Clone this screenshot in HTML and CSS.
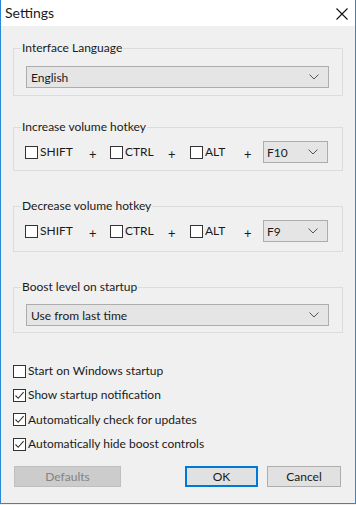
FILE: index.html
```html
<!DOCTYPE html>
<html>
<head>
<meta charset="utf-8">
<link rel="stylesheet" href="styles.css">
</head>
<body>
<div class="window">
  <div class="titlebar">
    <span class="title">Settings</span>
    <svg class="close" width="12" height="12" viewBox="0 0 12 12"><path d="M0.5 0.5 L11.5 11.5 M11.5 0.5 L0.5 11.5" stroke="#111" stroke-width="1.1" fill="none"/></svg>
  </div>
  <div class="content">
    <fieldset class="group g1">
      <legend>Interface Language</legend>
      <div class="select wide"><span>English</span><svg class="chev" width="10" height="6" viewBox="0 0 10 6"><path d="M0.5 0.5 L5 5 L9.5 0.5" stroke="#555" fill="none"/></svg></div>
    </fieldset>

    <fieldset class="group g2">
      <legend>Increase volume hotkey</legend>
      <div class="hotrow">
        <label class="cb c-shift"><span class="box"></span>SHIFT</label>
        <span class="plus p1">+</span>
        <label class="cb c-ctrl"><span class="box"></span>CTRL</label>
        <span class="plus p2">+</span>
        <label class="cb c-alt"><span class="box"></span>ALT</label>
        <span class="plus p3">+</span>
        <div class="select key"><span>F10</span><svg class="chev" width="10" height="6" viewBox="0 0 10 6"><path d="M0.5 0.5 L5 5 L9.5 0.5" stroke="#555" fill="none"/></svg></div>
      </div>
    </fieldset>

    <fieldset class="group g3">
      <legend>Decrease volume hotkey</legend>
      <div class="hotrow">
        <label class="cb c-shift"><span class="box"></span>SHIFT</label>
        <span class="plus p1">+</span>
        <label class="cb c-ctrl"><span class="box"></span>CTRL</label>
        <span class="plus p2">+</span>
        <label class="cb c-alt"><span class="box"></span>ALT</label>
        <span class="plus p3">+</span>
        <div class="select key"><span>F9</span><svg class="chev" width="10" height="6" viewBox="0 0 10 6"><path d="M0.5 0.5 L5 5 L9.5 0.5" stroke="#555" fill="none"/></svg></div>
      </div>
    </fieldset>

    <fieldset class="group g4">
      <legend>Boost level on startup</legend>
      <div class="select wide"><span>Use from last time</span><svg class="chev" width="10" height="6" viewBox="0 0 10 6"><path d="M0.5 0.5 L5 5 L9.5 0.5" stroke="#555" fill="none"/></svg></div>
    </fieldset>

    <div class="options">
      <label class="cb opt"><span class="box"></span>Start on Windows startup</label>
      <label class="cb opt"><span class="box checked"><svg width="11" height="11" viewBox="0 0 11 11"><path d="M1.5 5.5 L4.2 8.3 L9.6 2.2" stroke="#333" stroke-width="1.1" fill="none"/></svg></span>Show startup notification</label>
      <label class="cb opt"><span class="box checked"><svg width="11" height="11" viewBox="0 0 11 11"><path d="M1.5 5.5 L4.2 8.3 L9.6 2.2" stroke="#333" stroke-width="1.1" fill="none"/></svg></span>Automatically check for updates</label>
      <label class="cb opt"><span class="box checked"><svg width="11" height="11" viewBox="0 0 11 11"><path d="M1.5 5.5 L4.2 8.3 L9.6 2.2" stroke="#333" stroke-width="1.1" fill="none"/></svg></span>Automatically hide boost controls</label>
    </div>

    <div class="buttons">
      <button class="btn defaults" disabled>Defaults</button>
      <div class="spacer"></div>
      <button class="btn ok">OK</button>
      <button class="btn cancel">Cancel</button>
    </div>
  </div>
</div>
</body>
</html>
```

FILE: styles.css
```css
* { box-sizing: border-box; }
html, body { margin: 0; padding: 0; }
body {
  width: 356px;
  height: 505px;
  overflow: hidden;
  font-family: Lato, "Noto Sans", sans-serif;
  font-size: 12px;
  color: #1a1a1a;
  background: #f0f0f0;
}
.window {
  width: 356px;
  height: 504px;
  border-left: 1px solid #2b88d8;
  border-right: 1px solid #2b88d8;
  border-bottom: 1px solid #2b88d8;
  background: #f0f0f0;
  display: flex;
  flex-direction: column;
}
.titlebar {
  height: 26px;
  background: #fff;
  display: flex;
  align-items: center;
  justify-content: space-between;
  padding: 0 7px 0 4px;
}
.title {
  font-size: 14px;
  line-height: 18px;
  margin-top: -1px;
}
.close { margin-top: 1px; }
.content {
  padding: 15px 12px 0 12px;
  display: flex;
  flex-direction: column;
}
.group {
  margin: 0;
  border: 1px solid #dcdcdc;
  padding: 11px 13px 7px 12px;
  min-width: 0;
}
.group legend {
  padding: 0 1px;
  margin-left: -5px;
  line-height: 14px;
  height: 14px;
}
.g2 { margin-top: 24px; padding-top: 7px; padding-bottom: 7px; }
.g3 { margin-top: 28px; padding-top: 7px; padding-bottom: 9px; }
.g4 { margin-top: 28px; padding-top: 10px; padding-bottom: 6px; }
.select {
  height: 22px;
  border: 1px solid #adadad;
  background: #e5e5e5;
  display: flex;
  align-items: center;
  justify-content: space-between;
  padding: 0 9px 0 4px;
}
.select span { line-height: 14px; margin-top: 1px; }
.hotrow {
  display: flex;
  align-items: center;
  height: 22px;
}
.cb {
  display: flex;
  align-items: center;
  line-height: 14px;
}
.box {
  width: 13px;
  height: 13px;
  border: 1px solid #333;
  background: #fff;
  margin-right: 2px;
  display: flex;
  align-items: center;
  justify-content: center;
  flex: none;
}
.c-shift { margin-left: -1px; width: 64px; }
.c-ctrl { width: 58px; }
.c-alt { width: 54px; }
.plus { font-size: 13px; line-height: 14px; margin-top: 3px; }
.p1 { width: 21px; }
.p2 { width: 22px; }
.p3 { width: 19px; }
.key { width: 65px; padding-left: 3px; }
.options {
  margin-top: 31px;
  display: flex;
  flex-direction: column;
  gap: 10.4px;
}
.opt { height: 14px; }
.buttons {
  margin-top: 15px;
  display: flex;
  align-items: center;
  padding-left: 1px;
}
.spacer { flex: 1; }
.btn {
  font-family: inherit;
  font-size: 12px;
  height: 21px;
  border: 1px solid #adadad;
  background: #e1e1e1;
  color: #1a1a1a;
  padding: 0;
  margin: 0;
}
.defaults { width: 107px; background: #cccccc; border-color: #bfbfbf; color: #838383; }
.ok { width: 73px; border: 1px solid #0078d7; box-shadow: inset 0 0 0 1px #0078d7; margin-right: 9px; }
.cancel { width: 74px; margin-right: 2px; }
```
